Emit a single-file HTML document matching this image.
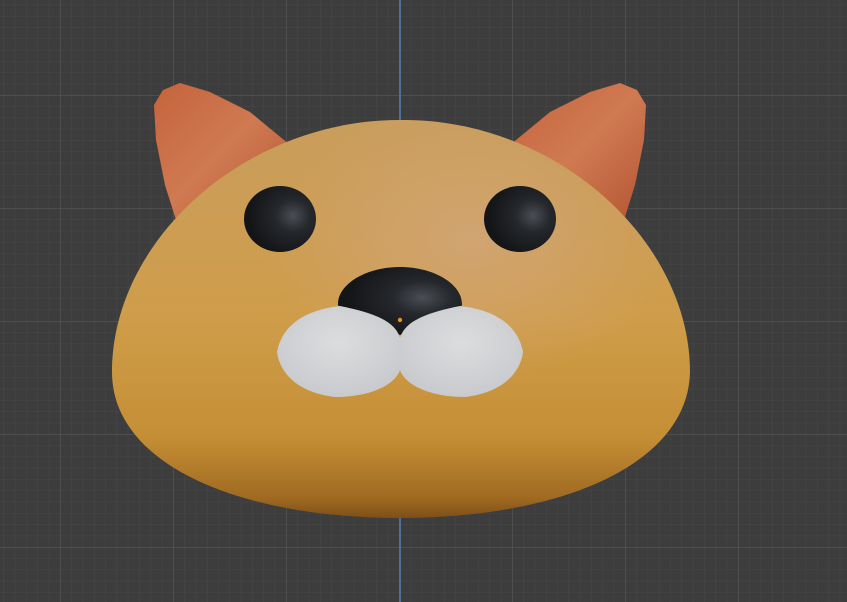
<!DOCTYPE html>
<html><head><style>
html,body{margin:0;padding:0;background:#3d3d3d;width:847px;height:602px;overflow:hidden}
svg{display:block}
</style></head><body>
<svg width="847" height="602" viewBox="0 0 847 602" xmlns="http://www.w3.org/2000/svg">
<defs>
<pattern id="minor" x="60" y="95" width="11.3" height="11.3" patternUnits="userSpaceOnUse">
<path d="M0 0H11.3M0 0V11.3" stroke="#474747" stroke-width="1" fill="none"/>
</pattern>
<pattern id="major" x="60" y="95" width="113" height="113" patternUnits="userSpaceOnUse">
<path d="M0 0H113M0 0V113" stroke="#575757" stroke-width="1.2" fill="none"/>
</pattern>
<linearGradient id="headv" x1="0" y1="0" x2="0" y2="1">
<stop offset="0" stop-color="#c99d5c"/>
<stop offset="0.5" stop-color="#cf9d4a"/>
<stop offset="0.8" stop-color="#c48e34"/>
<stop offset="0.95" stop-color="#a06a22"/>
<stop offset="1" stop-color="#7e4f18"/>
</linearGradient>
<radialGradient id="hl" cx="0.62" cy="0.3" r="0.35">
<stop offset="0" stop-color="#d2a67a" stop-opacity="0.8"/>
<stop offset="1" stop-color="#d2a67a" stop-opacity="0"/>
</radialGradient>
<linearGradient id="ear" x1="0" y1="0" x2="1" y2="1">
<stop offset="0" stop-color="#c4633c"/>
<stop offset="0.5" stop-color="#d07a52"/>
<stop offset="1" stop-color="#b45532"/>
</linearGradient>
<radialGradient id="eye" cx="0.68" cy="0.45" r="0.6">
<stop offset="0" stop-color="#4a4e54"/>
<stop offset="0.4" stop-color="#25282c"/>
<stop offset="1" stop-color="#141517"/>
</radialGradient>
<radialGradient id="mz" cx="0.5" cy="0.4" r="0.6">
<stop offset="0" stop-color="#dcdddf"/>
<stop offset="1" stop-color="#c9cacd"/>
</radialGradient>
</defs>
<rect width="847" height="602" fill="#3d3d3d"/>
<rect width="847" height="602" fill="url(#minor)"/>
<rect width="847" height="602" fill="url(#major)"/>
<line x1="400" y1="0" x2="400" y2="602" stroke="#4f6e98" stroke-width="2"/>
<path d="M180,83 L163,90 L154,105 L156,140 L165,185 L176,220 L290,145 L250,112 L210,92 Z" fill="url(#ear)"/>
<path d="M620,83 L637,90 L646,105 L644,140 L635,185 L624,220 L510,145 L550,112 L590,92 Z" fill="url(#ear)"/>
<path d="M400,120 C555,118 690,240 690,372 C688,465 560,518 400,518 C240,518 112,465 112,372 C112,240 245,120 400,120 Z" fill="url(#headv)"/>
<path d="M400,120 C555,118 690,240 690,372 C688,465 560,518 400,518 C240,518 112,465 112,372 C112,240 245,120 400,120 Z" fill="url(#hl)"/>
<ellipse cx="280" cy="219" rx="36" ry="33" fill="url(#eye)"/>
<ellipse cx="520" cy="219" rx="36" ry="33" fill="url(#eye)"/>
<path d="M400,267 C435,267 463,285 462,305 C455,318 420,325 400,335 C380,325 345,318 338,305 C337,285 365,267 400,267 Z" fill="url(#eye)"/>
<path d="M400,338 C395,320 370,312 340,306 C305,310 282,325 277,352 C280,375 300,393 335,397 C370,397 395,385 400,370 Z" fill="url(#mz)"/>
<path d="M400,338 C405,320 430,312 460,306 C495,310 518,325 523,352 C520,375 500,393 465,397 C430,397 405,385 400,370 Z" fill="url(#mz)"/>
<circle cx="400" cy="320" r="2.2" fill="#f08a1e"/>
</svg>
</body></html>
